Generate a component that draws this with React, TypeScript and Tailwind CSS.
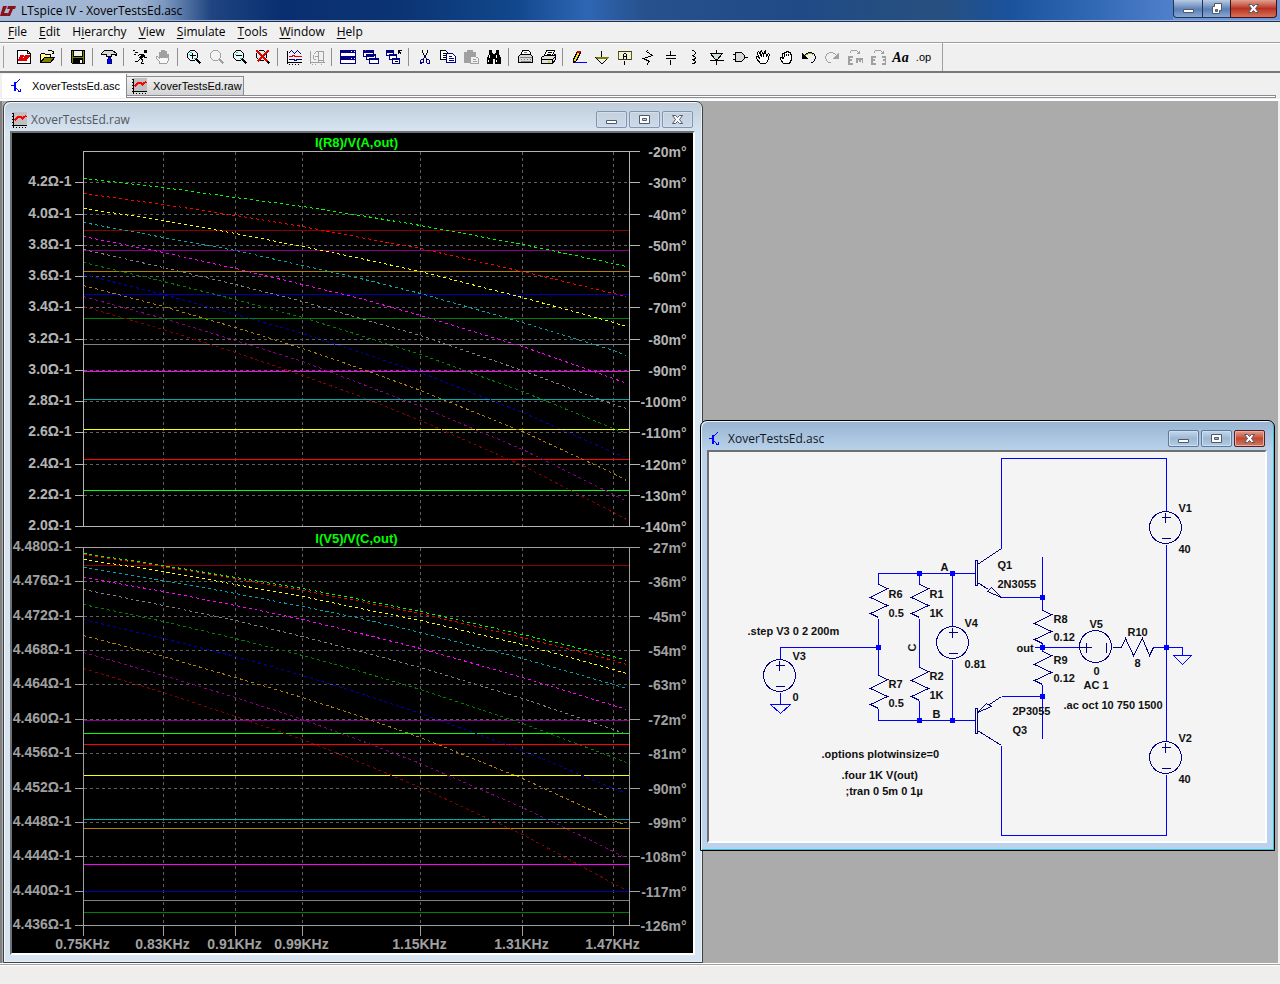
import clsx from "clsx";
import type { ReactNode } from "react";

/**
 * SPICE workbench shell
 *
 * LAYOUT STRUCTURE:
 * Title bar → menu → toolbar → document tabs → MDI desktop → status bar
 *
 * Drawings use viewBoxes shifted by half a pixel, so whole-number coordinates
 * land on pixel centres.
 */

type Layer = { d: string; s?: string; f?: string; w?: number };

const K = "#000000";
const NAVY = "#000080";
const GREY = "#a0a0a0";

const ICONS: Record<string, Layer[]> = {
  new: [
    { d: "M1 1H11L14 4V14H1Z", s: K, f: "#fff" },
    { d: "M11 1V4H14", s: K },
    { d: "M2 11L4 6H7L6 9H8L7 11ZM8 11L10 8H8L9 6H13L12 8H11L10 11Z", s: "#e00000", f: "#e00000" },
  ],
  open: [
    { d: "M1 13V5L2 4H5L6 5H11V7", s: K, f: "#ffff90" },
    { d: "M1 13L5 8H15L11 13Z", s: K, f: "#808000" },
    { d: "M8 2L9 1H12L14 3M14 1V4M12 4H14", s: K },
  ],
  save: [
    { d: "M1 1H14V14H2L1 13Z", s: K, f: "#808000" },
    { d: "M3 1H12V7H3Z", s: K, f: "#f0f0f0" },
    { d: "M3 9H12V14H3Z", s: K, f: K },
    { d: "M10 10V13", s: "#fff", w: 2 },
  ],
  hammer: [
    { d: "M0 4L3 1H11L15 4V6L13 5H10V7H5V5H0Z", s: K, f: "#d8d8d8" },
    { d: "M7 8H9V10H10V14H6V10H7Z", s: NAVY, f: "#0000ff" },
  ],
  run: [
    { d: "M12 1H14V3H12Z", s: K, f: K },
    { d: "M11 5L8 9", s: K, w: 3 },
    { d: "M10 5H7L5 7M11 6L12 8H14M8 9L5 12H2M9 9L10 11L9 14H11M0 1H2M2 3H5M1 5H3", s: K },
  ],
  hand: [
    {
      d: "M4 14V12L1 9V7H2L4 9V3H5V8H6V1H7V8H8V1H9V8H10V2H11V8H12V5H13V11L11 14Z",
      s: GREY,
      f: "#f8f8f8",
    },
  ],
  zoomIn: [
    { d: "M4 1H8L11 4V8L8 11H4L1 8V4Z", s: K, f: "#e8f8f8" },
    { d: "M3 3H5M3 4V5M9 8V9H7", s: "#00d0d0" },
    { d: "M3 6H9M6 3V9", s: K },
    { d: "M10 10L14 14", s: K, w: 2 },
  ],
  zoomPan: [
    { d: "M4 1H8L11 4V8L8 11H4L1 8V4Z", s: GREY, f: "#f4f4f4" },
    { d: "M10 10L14 14", s: GREY, w: 2 },
  ],
  zoomOut: [
    { d: "M4 1H8L11 4V8L8 11H4L1 8V4Z", s: K, f: "#e8f8f8" },
    { d: "M3 3H5M3 4V5M9 8V9H7", s: "#00d0d0" },
    { d: "M3 6H9", s: K },
    { d: "M10 10L14 14", s: K, w: 2 },
  ],
  zoomFit: [
    { d: "M4 1H8L11 4V8L8 11H4L1 8V4Z", s: K, f: "#d0f0f0" },
    { d: "M10 10L14 14", s: K, w: 2 },
    { d: "M1 1L12 12M13 1L2 12", s: "#e00000", w: 2 },
  ],
  plot: [
    { d: "M1 1V14M0 2H1M0 5H1M0 8H1M0 11H1M0 13H15M3 14V15M6 14V15M9 14V15M12 14V15", s: K },
    { d: "M2 4L5 1L8 4L11 1L15 5", s: NAVY },
    { d: "M2 7H5L7 6L9 7H15", s: "#e00000" },
    { d: "M2 10H7L9 11L11 10H15", s: NAVY },
  ],
  plotPick: [
    { d: "M1 1V14M0 2H1M0 5H1M0 8H1M0 13H15M3 14V15M6 14V15M12 14V15", s: GREY },
    { d: "M4 5L7 2H14M9 2V13M14 2V13M5 7H8M9 11H14M4 5V9L7 11", s: GREY },
  ],
  tile: [
    { d: "M0 1H15V7H0ZM0 8H15V14H0Z", s: NAVY, f: "#fff" },
    { d: "M0 2H15M0 9H15", s: NAVY, w: 2 },
    { d: "M10 2H11M13 2H14M10 9H11M13 9H14", s: "#fff" },
  ],
  cascade: [
    { d: "M0 1H10V7H0ZM3 5H12V10H3ZM6 9H15V14H6Z", s: NAVY, f: "#fff" },
    { d: "M0 2H10M3 5H12M6 9H15", s: NAVY, w: 2 },
    { d: "M1 1H2", s: "#e000e0" },
  ],
  closeAll: [
    { d: "M0 1H7V6H0ZM3 5H10V10H3ZM6 9H13V14H6Z", s: NAVY, f: "#fff" },
    { d: "M0 2H7M3 5H10M6 9H13", s: NAVY, w: 2 },
    { d: "M8 12H11M12 1H15M12 1V4M12 1L15 5", s: K },
  ],
  cut: [
    { d: "M5 0V3L8 8M10 0V3L7 8", s: K },
    { d: "M6 3V5M9 3V5", s: K },
    { d: "M7 8L5 10M8 8L10 10M4 10H6V13H5L3 14V11ZM9 10H11L12 11V14H10L9 13Z", s: NAVY },
  ],
  copy: [
    { d: "M0 1H5L8 4V10H0Z", s: K, f: "#fff" },
    { d: "M2 4H5M2 6H6M2 8H6", s: K },
    { d: "M6 4H12L15 7V13H6Z", s: NAVY, f: "#fff" },
    { d: "M8 7H11M8 9H13M8 11H13", s: NAVY },
  ],
  paste: [
    { d: "M1 3H4V1H9V3H12V13H1Z", s: GREY, f: GREY },
    { d: "M7 7H12L15 9V14H7Z", s: GREY, f: "#f0f0f0" },
    { d: "M9 10H12M9 12H13", s: GREY },
  ],
  find: [
    { d: "M3 1H5V4H6V14H1V9L3 4ZM10 1H12V4L14 9V14H9V4H10ZM6 5H9V9H6Z", s: K, f: K },
    { d: "M3 5V8M2 10V12M10 5V8M10 10V12", s: "#fff" },
  ],
  print: [
    { d: "M3 6L5 1H11L13 3V6", s: K, f: "#fff" },
    { d: "M1 7L3 5H13L15 7V13H1Z", s: K, f: "#d8d8d8" },
    { d: "M6 3H9M2 8H14M3 10H4M6 10H7M9 10H10M12 10H13M3 12H13", s: "#808080" },
  ],
  printSetup: [
    { d: "M4 6L6 1H14L12 6", s: K, f: "#fff" },
    { d: "M1 8L4 6H13L15 5V10L12 14H1Z", s: K, f: "#e0e0e0" },
    { d: "M1 10H12L15 7M12 10V14M7 3H11M6 5H10", s: K },
    { d: "M7 12H9", s: "#e0d000", w: 2 },
  ],
  pencil: [
    { d: "M2 13V10L6 2L9 3L5 11Z", s: K, f: "#ffe000" },
    { d: "M6 2L9 3", s: "#e00000", w: 2 },
    { d: "M2 11V13", s: K, w: 2 },
    { d: "M3 13H15", s: "#0000ff" },
  ],
  ground: [
    { d: "M7 1V8", s: K },
    { d: "M1 8H14L8 14H7Z", s: K, f: "#f0f0f0" },
    { d: "M1 8H14M2 9H13", s: "#808000" },
  ],
  label: [
    { d: "M1 2H14V10H1Z", s: "#404000", f: "#f0f0e0" },
    { d: "M6 9V5L7 4H8L9 5V9M6 7H9M7 11V15", s: K },
    { d: "M1 2V10M14 2V10", s: "#606000" },
  ],
  resistor: [{ d: "M7 0V1L6 2L12 6L3 9L9 12L7 14V15", s: K }],
  capacitor: [
    { d: "M7 1V6M7 10V15", s: K },
    { d: "M2 6H12M2 9H12", s: K },
  ],
  inductor: [{ d: "M5 1H7L9 3V4L7 6H5M6 6L9 8V9L7 10H5M6 10L9 12V13L7 14H5", s: K }],
  diode: [
    { d: "M7 0V15M0 11H14", s: K },
    { d: "M1 4H13L8 10H6Z", s: K, f: "#c8e0e0" },
  ],
  gate: [
    { d: "M3 3H9L12 6V9L9 12H3Z", s: K, f: "#d8d8d8" },
    { d: "M0 5H3M0 10H3M12 8H15", s: K },
  ],
  move: [
    {
      d: "M5 14L1 9V7H2L4 9L2 4V3L3 2L6 7L5 2L6 1L8 6L9 2L10 1L11 7L13 4L14 5L12 12L10 14Z",
      s: K,
      f: "#fff",
    },
  ],
  drag: [
    { d: "M5 14L2 10V8H3L5 9L4 6V4H6V3H8V2H10V3H12V5H13V10L11 14Z", s: K, f: "#fff" },
    { d: "M6 4V7M8 4V6M10 4V6", s: K },
  ],
  undo: [
    { d: "M3 6L5 4L8 3H10L13 5L14 8L13 11L11 13H9", s: K },
    { d: "M4 6L7 4H10L12 6", s: "#b0b000" },
    { d: "M1 4V9H6Z", s: K, f: K },
  ],
  redo: [
    { d: "M12 6L10 4L7 3H5L2 5L1 8L2 11L4 13H6", s: GREY },
    { d: "M14 4V9H9Z", s: GREY, f: GREY },
  ],
  mirror: [
    { d: "M2 4L4 1H9L12 4M12 1V4H9", s: GREY },
    { d: "M5 7H1V14H5M1 10H4M8 9H15M15 9V13M12 9V12M9 9V13", s: GREY, w: 2 },
  ],
  rotate: [
    { d: "M3 4L5 1H10L13 4M13 1V4H10", s: GREY },
    { d: "M5 7H1V14H5M1 10H4M11 7H15V14H11M15 10H12", s: GREY, w: 2 },
  ],
  schematic: [
    { d: "M0 7H3M5 5L9 1M5 9L10 14M7 13H10V10M8 11V13H9", s: "#0000ff" },
    { d: "M4 3V12", s: "#0000ff", w: 2 },
  ],
  waveform: [
    { d: "M2 0H15V13H2Z", f: "#c0c0c0", s: "#c0c0c0" },
    { d: "M2 0V15M0 13H15M0 1H1M0 4H1M0 7H1M0 10H1M5 14V15M8 14V15M11 14V15M14 14V15", s: K },
    { d: "M3 8L7 4H9L11 6L15 3", s: "#ff0000", w: 2 },
  ],
};

function Icon({ name }: { name: string }) {
  return (
    <svg viewBox="-0.5 -0.5 16 16" className="size-4 shrink-0" shapeRendering="crispEdges" aria-hidden="true">
      {ICONS[name].map((l, i) => (
        <path key={i} d={l.d} fill={l.f ?? "none"} stroke={l.s ?? "none"} strokeWidth={l.w ?? 1} />
      ))}
    </svg>
  );
}

const TOOL_GROUPS = [
  ["new", "open"],
  ["save"],
  ["hammer"],
  ["run", "hand"],
  ["zoomIn", "zoomPan", "zoomOut", "zoomFit"],
  ["plot", "plotPick"],
  ["tile", "cascade", "closeAll"],
  ["cut", "copy", "paste", "find"],
  ["print", "printSetup"],
  [
    "pencil", "ground", "label", "resistor", "capacitor", "inductor", "diode", "gate",
    "move", "drag", "undo", "redo", "mirror", "rotate",
  ],
];

const MENUS = ["File", "Edit", "Hierarchy", "View", "Simulate", "Tools", "Window", "Help"];

/* ---------- Plots ---------- */

const C = {
  green: "#00ff00",
  red: "#ff0000",
  yellow: "#ffff00",
  teal: "#00a8a8",
  magenta: "#ff00ff",
  grey: "#808080",
  dgreen: "#008000",
  blue: "#0000b0",
  orange: "#b08000",
  purple: "#880088",
  maroon: "#880000",
};

const XS = [83, 163, 235, 302, 360, 420, 522, 613, 626];
const X_TICKS: [number, string][] = [
  [83, "0.75KHz"],
  [163, "0.83KHz"],
  [235, "0.91KHz"],
  [302, "0.99KHz"],
  [420, "1.15KHz"],
  [522, "1.31KHz"],
  [613, "1.47KHz"],
];

type Pane = {
  title: string;
  titleY: number;
  axis: string;
  ticks: number[];
  left: string[];
  right: string[];
  levels: [number, string][];
  curves: [string, number[]][];
};

const PANES: Pane[] = [
  {
    title: "I(R8)/V(A,out)",
    titleY: 146,
    axis: "#b4b4b4",
    ticks: [151, 182, 214, 245, 276, 307, 339, 370, 401, 432, 464, 495, 526],
    left: ["", "4.2", "4.0", "3.8", "3.6", "3.4", "3.2", "3.0", "2.8", "2.6", "2.4", "2.2", "2.0"],
    right: ["-20", "-30", "-40", "-50", "-60", "-70", "-80", "-90", "-100", "-110", "-120", "-130", "-140"],
    levels: [
      [230, C.maroon], [250, C.purple], [271, C.orange], [294, C.blue], [318, C.dgreen], [344, C.grey],
      [371, C.magenta], [399, C.teal], [429, C.yellow], [459, C.red], [490, C.green],
    ],
    curves: [
      [C.maroon, [306, 329, 352, 375, 396, 420, 465, 512, 519]],
      [C.purple, [296, 318, 340, 361, 383, 406, 449, 494, 501]],
      [C.orange, [285, 306, 327, 348, 368, 390, 431, 473, 480]],
      [C.blue, [274, 294, 314, 333, 352, 372, 412, 452, 457]],
      [C.dgreen, [262, 281, 299, 317, 335, 354, 391, 428, 433]],
      [C.grey, [249, 267, 284, 301, 318, 335, 370, 404, 408]],
      [C.magenta, [236, 252, 268, 284, 298, 315, 346, 378, 383]],
      [C.teal, [222, 237, 250, 265, 278, 293, 322, 350, 355]],
      [C.yellow, [208, 220, 233, 246, 258, 271, 297, 322, 326]],
      [C.red, [193, 204, 215, 226, 237, 248, 271, 293, 296]],
      [C.green, [178, 187, 197, 206, 215, 225, 244, 263, 266]],
    ],
  },
  {
    title: "I(V5)/V(C,out)",
    titleY: 542,
    axis: "#a0a0a0",
    ticks: [547, 581, 616, 650, 684, 719, 753, 788, 822, 856, 891, 925],
    left: [
      "4.480", "4.476", "4.472", "4.468", "4.464", "4.460", "4.456", "4.452", "4.448", "4.444", "4.440", "4.436",
    ],
    right: ["-27", "-36", "-45", "-54", "-63", "-72", "-81", "-90", "-99", "-108", "-117", "-126"],
    levels: [
      [565, C.maroon], [720, C.purple], [733, C.green], [744, C.red], [775, C.yellow], [819, C.teal],
      [828, C.orange], [864, C.magenta], [891, C.blue], [900, C.grey], [912, C.dgreen],
    ],
    curves: [
      [C.maroon, [668, 692, 716, 739, 762, 787, 834, 883, 890]],
      [C.purple, [652, 675, 697, 719, 740, 763, 807, 851, 858]],
      [C.orange, [635, 656, 677, 697, 716, 737, 778, 820, 825]],
      [C.blue, [619, 638, 656, 675, 693, 713, 750, 788, 793]],
      [C.dgreen, [604, 621, 638, 655, 671, 689, 723, 757, 762]],
      [C.grey, [589, 605, 620, 636, 651, 667, 698, 729, 734]],
      [C.magenta, [577, 591, 605, 619, 633, 648, 677, 705, 709]],
      [C.teal, [567, 580, 593, 606, 618, 632, 658, 684, 688]],
      [C.yellow, [559, 571, 584, 596, 608, 620, 644, 669, 673]],
      [C.red, [554, 566, 578, 590, 601, 613, 637, 660, 664]],
      [C.green, [553, 565, 577, 588, 599, 611, 634, 656, 660]],
    ],
  },
];

function PlotPane({ pane, last }: { pane: Pane; last?: boolean }) {
  const top = pane.ticks[0];
  const bottom = pane.ticks[pane.ticks.length - 1];
  const inner = pane.ticks.slice(1, -1);
  return (
    <g>
      <g shapeRendering="crispEdges" fill="none">
        {inner.map((y) => (
          <path key={y} d={`M83 ${y}H629`} stroke="#606060" strokeDasharray="3 3" />
        ))}
        {X_TICKS.slice(1).map(([x]) => (
          <path key={x} d={`M${x} ${top}V${bottom}`} stroke="#606060" strokeDasharray="3 3" />
        ))}
        {pane.levels.map(([y, color]) => (
          <path key={y} d={`M83 ${y}H629`} stroke={color} />
        ))}
        {pane.curves.map(([color, ys]) => (
          <polyline
            key={color}
            points={ys.map((y, i) => `${XS[i]},${y}`).join(" ")}
            stroke={color}
            strokeDasharray="3 3"
          />
        ))}
        <path d={`M83 ${top}H629V${bottom}H83Z`} stroke={pane.axis} />
        {pane.ticks.map((y, i) => (
          <path key={y} d={pane.left[i] ? `M74 ${y}H83M629 ${y}H639` : `M629 ${y}H639`} stroke={pane.axis} />
        ))}
        {last && X_TICKS.map(([x]) => <path key={x} d={`M${x} ${bottom}V935`} stroke={pane.axis} />)}
      </g>
      <g className="text-[14px] font-bold" fill={pane.axis}>
        {pane.ticks.map((y, i) => (
          <g key={y} textAnchor="end">
            {pane.left[i] && <text x={71} y={y + 3}>{pane.left[i]}Ω-1</text>}
            <text x={686} y={y + 5}>{pane.right[i]}m°</text>
          </g>
        ))}
        {last &&
          X_TICKS.map(([x, label]) => (
            <text key={x} x={x - 1} y={948} textAnchor="middle">
              {label}
            </text>
          ))}
      </g>
      <text x={356} y={pane.titleY} textAnchor="middle" fill={C.green} className="text-[13px] font-bold">
        {pane.title}
      </text>
    </g>
  );
}

function Waveforms() {
  return (
    <svg
      viewBox="11.5 132.5 681 820"
      className="block h-full w-full bg-black font-['Liberation_Sans',Arial,sans-serif]"
      role="img"
      aria-label="Waveform plots"
    >
      <PlotPane pane={PANES[0]} />
      <PlotPane pane={PANES[1]} last />
    </svg>
  );
}

/* ---------- Schematic ---------- */

const WIRES =
  "M1001 548V458H1166V511M1166 544V741M1166 774V835H1001V745" +
  "M975 573H878V584M878 618V675M878 708V720H975M919 573V584M919 618V667M919 700V720" +
  "M952 573V626M952 659V720M878 647H780V659M780 692V704M770 704H790L780 713Z" +
  "M1001 597H1042M1042 556V610M1042 642V651M1042 684V738M1001 696H1042" +
  "M1034 647H1079M1153 647H1182V655M1173 655H1191L1182 664Z";

const PARTS =
  "M975 560H977V585H975ZM977 564L1001 548M977 582L988 589M987 591L991 587L1001 597Z" +
  "M975 708H977V733H975ZM977 730L1001 745M977 712L986 703L991 706ZM989 704L1001 696" +
  "M1112 647H1121L1125 638L1133 655L1142 638L1149 655L1153 647";

/** Vertical resistors, given by their top end */
const RESISTORS: [number, number][] = [[878, 584], [919, 584], [878, 675], [919, 667], [1042, 610], [1042, 651]];

const SOURCES: [number, number][] = [[779, 675], [952, 642], [1165, 527], [1165, 757]];

const NODES: [number, number][] = [
  [878, 647], [919, 573], [952, 573], [919, 720], [952, 720], [1042, 597], [1042, 647], [1042, 696], [1166, 647],
];

const LABELS: [number, number, string][] = [
  [747, 634, ".step V3 0 2 200m"],
  [792, 659, "V3"], [792, 700, "0"],
  [888, 597, "R6"], [888, 616, "0.5"],
  [929, 597, "R1"], [929, 616, "1K"],
  [888, 687, "R7"], [888, 706, "0.5"],
  [929, 679, "R2"], [929, 698, "1K"],
  [964, 626, "V4"], [964, 667, "0.81"],
  [940, 570, "A"], [932, 717, "B"],
  [821, 757, ".options plotwinsize=0"],
  [841, 778, ".four 1K V(out)"],
  [845, 794, ";tran 0 5m 0 1µ"],
  [997, 568, "Q1"], [997, 587, "2N3055"],
  [1012, 714, "2P3055"], [1012, 733, "Q3"],
  [1053, 622, "R8"], [1053, 640, "0.12"],
  [1053, 663, "R9"], [1053, 681, "0.12"],
  [1016, 651, "out"],
  [1089, 627, "V5"], [1093, 674, "0"], [1083, 688, "AC 1"],
  [1127, 635, "R10"], [1134, 666, "8"],
  [1063, 708, ".ac oct 10 750 1500"],
  [1178, 511, "V1"], [1178, 552, "40"],
  [1178, 741, "V2"], [1178, 782, "40"],
];

function Schematic() {
  return (
    <svg
      viewBox="708.5 451.5 556 389"
      className="block h-full w-full bg-[#f4f4f4] font-['Liberation_Sans',Arial,sans-serif]"
      role="img"
      aria-label="Schematic"
    >
      <g shapeRendering="crispEdges" fill="none">
        <path d={WIRES} stroke="#0000ff" />
        <g stroke={NAVY}>
          <path d={PARTS} />
          {RESISTORS.map(([x, y]) => (
            <path key={`${x}-${y}`} d={`M${x} ${y}l9 4l-17 9l17 8l-17 8l8 4`} />
          ))}
          {SOURCES.map(([x, y]) => (
            <g key={`${x}-${y}`}>
              <circle cx={x} cy={y} r={16} />
              <path d={`M${x - 4} ${y - 10}h9M${x} ${y - 15}v10M${x - 4} ${y + 11}h9`} />
            </g>
          ))}
          <circle cx={1095} cy={646} r={16} />
          <path d="M1079 647H1091M1086 642V652M1106 642V652" />
        </g>
        {NODES.map(([x, y]) => (
          <path key={`${x}-${y}`} d={`M${x - 2.5} ${y}h5`} stroke="#0000ff" strokeWidth={5} />
        ))}
      </g>
      <g className="text-[11px] font-bold" fill="#101010">
        {LABELS.map(([x, y, label]) => (
          <text key={`${x}-${y}`} x={x} y={y}>
            {label}
          </text>
        ))}
        <text transform="translate(915 651) rotate(-90)">C</text>
      </g>
    </svg>
  );
}

/* ---------- Windows ---------- */

function Glyph({ kind }: { kind: string }) {
  return (
    <svg viewBox="-0.5 -0.5 13 11" className="h-[11px] w-[13px]" aria-hidden="true">
      {kind === "Minimize" && <path d="M1 6H11V9H1Z" fill="#fff" stroke="#50586c" />}
      {kind === "Maximize" && (
        <path d="M1 1H11V9H1ZM4 4H8V6H4Z" fill="#fff" fillRule="evenodd" stroke="#50586c" />
      )}
      {kind === "Restore" && (
        <path d="M4 0H11V7H9V10H2V3H4ZM5 6H7V8H5Z" fill="#fff" fillRule="evenodd" stroke="#50586c" />
      )}
      {kind === "Close" && (
        <path
          d="M1 1H4L6 3L8 1H11L8 5L11 9H8L6 7L4 9H1L4 5Z"
          fill="#fff"
          stroke="#50586c"
        />
      )}
    </svg>
  );
}

function ChildWindow({
  title,
  icon,
  active,
  className,
  children,
}: {
  title: string;
  icon: string;
  active?: boolean;
  className: string;
  children: ReactNode;
}) {
  return (
    <section
      aria-label={title}
      className={clsx(
        "absolute flex flex-col rounded-t-[7px] border pr-[7px] pb-[7px] pl-[6px]",
        active
          ? "border-black bg-[#bad2eb] bg-linear-to-b from-[#98b4d2] from-0% to-[#bad2eb] to-[30px] shadow-[inset_1px_1px_0_#e8f4fc,inset_-1px_-1px_0_#38c0d8]"
          : "border-[#404040] bg-[#d7e4f2] bg-linear-to-b from-[#bfccd9] from-0% to-[#d7e4f2] to-[30px] shadow-[inset_1px_1px_0_#f4f8fc,inset_-1px_-1px_0_#e8f0f8]",
        className,
      )}
    >
      <header className="flex h-[29px] shrink-0 items-center gap-1 pt-[6px] pr-[2px] pl-px">
        <Icon name={icon} />
        <h2 className={clsx("flex-1 text-[12px]", active ? "text-[#101820]" : "text-[#505860]")}>{title}</h2>
        <div className="flex gap-[2px]">
          {["Minimize", "Maximize", "Close"].map((kind) => (
            <button
              key={kind}
              type="button"
              aria-label={kind}
              className={clsx(
                "flex h-[17px] w-[31px] items-center justify-center rounded-[2px] border",
                !active && "border-[#8494b0] bg-linear-to-b from-[#c4d0de] to-[#ccd9e8] shadow-[inset_0_0_0_1px_#d4dfeb]",
                active && kind === "Close" && "border-[#5c1c20] bg-linear-to-b from-[#e4a090] via-[#c04830] via-50% to-[#d07860] shadow-[inset_0_0_0_1px_#e8b0a0]",
                active && kind !== "Close" && "border-[#607898] bg-linear-to-b from-[#c4d8ec] via-[#9cb8d4] via-50% to-[#b4cce4] shadow-[inset_0_0_0_1px_#cce0f0]",
              )}
            >
              <Glyph kind={kind} />
            </button>
          ))}
        </div>
      </header>
      <div className="min-h-0 flex-1 border-2 border-t-[#707070] border-r-white border-b-white border-l-[#707070]">
        {children}
      </div>
    </section>
  );
}

/* ---------- Shell ---------- */

function TitleBar() {
  return (
    <header className="flex h-[22px] shrink-0 border-b border-[#1e2f50]">
      <div className="flex min-w-0 flex-1 items-center gap-[5px] bg-[linear-gradient(90deg,#a8bcd8_0%,#9cb2d0_12%,#7c98c0_14%,#1f4480_18%,#0a2f70_24%,#0b3474_34%,#11488c_44%,#2f66b4_50%,#27518c_55%,#1f4a86_68%,#28507f_80%,#1a529c_86%,#3068b4_93%,#5080cc_100%)] shadow-[inset_0_-1px_0_#9fb4d4]">
        <svg viewBox="0 0 16 12" className="h-3 w-4" aria-hidden="true">
          <path d="M3 1H7L4 8H8L7 11H0ZM8 1H16L15 4H13L10 11H7L10 4H7Z" fill="#8c1018" />
        </svg>
        <h1 className="text-[12px] text-black">LTspice IV - XoverTestsEd.asc</h1>
      </div>
      <div className="flex w-[107px] bg-[#6c96d8] pr-[3px] shadow-[inset_0_-1px_0_#9fb4d4]">
        <button
          type="button"
          aria-label="Minimize"
          className="flex h-[18px] w-[30px] items-center justify-center rounded-bl-[4px] border border-t-0 border-[#203458] bg-linear-to-b from-[#b8cce4] via-[#5c80b4] via-55% to-[#88a8d4]"
        >
          <Glyph kind="Minimize" />
        </button>
        <button
          type="button"
          aria-label="Restore"
          className="flex h-[18px] w-[27px] items-center justify-center border-b border-[#203458] bg-linear-to-b from-[#b8cce4] via-[#5c80b4] via-55% to-[#88a8d4]"
        >
          <Glyph kind="Restore" />
        </button>
        <button
          type="button"
          aria-label="Close"
          className="flex h-[18px] flex-1 items-center justify-center rounded-br-[4px] border border-t-0 border-[#401018] bg-linear-to-b from-[#e0a090] via-[#b83020] via-50% to-[#d87058]"
        >
          <Glyph kind="Close" />
        </button>
      </div>
    </header>
  );
}

function Toolbar() {
  return (
    <div
      role="toolbar"
      aria-label="Main"
      className="flex h-[30px] shrink-0 items-center border-b-2 border-[#787878] pl-[3px]"
    >
      <div className="mr-2 h-[22px] w-px bg-[#a0a0a0]" />
      {TOOL_GROUPS.map((group, i) => (
        <div key={group[0]} className="flex items-center">
          {i > 0 && <div className="mr-1 ml-[3px] h-[18px] w-px bg-[#909090]" />}
          {group.map((name) => (
            <button
              key={name}
              type="button"
              aria-label={name}
              className="flex h-[22px] w-[23px] items-center justify-center"
            >
              <Icon name={name} />
            </button>
          ))}
        </div>
      ))}
      <button
        type="button"
        className="h-[22px] w-[23px] font-['Liberation_Serif',serif] text-[14px] font-bold italic"
      >
        Aa
      </button>
      <button type="button" className="h-[22px] w-[23px] font-['Liberation_Sans',Arial,sans-serif] text-[11px]">
        .op
      </button>
      <div className="ml-[7px] h-full w-px bg-[#a0a0a0]" />
    </div>
  );
}

function DocumentTabs() {
  return (
    <div className="flex h-[27px] shrink-0 flex-col">
      <nav aria-label="Documents" className="flex h-[21px] items-end pl-[2px]">
        <button
          type="button"
          className="relative -mb-[3px] flex h-6 w-[125px] items-center gap-[6px] border-r border-[#898c95] bg-white pl-2 font-['Liberation_Sans',Arial,sans-serif] text-[11px]"
        >
          <Icon name="schematic" />
          XoverTestsEd.asc
        </button>
        <button
          type="button"
          className="flex h-[19px] w-[117px] items-center gap-[6px] border border-b-0 border-l-0 border-[#898c95] bg-linear-to-b from-[#f0f0f0] to-[#d4d4d4] pl-1 font-['Liberation_Sans',Arial,sans-serif] text-[11px]"
        >
          <Icon name="waveform" />
          XoverTestsEd.raw
        </button>
      </nav>
      <div className="mr-1 ml-[2px] h-[3px] border border-l-0 border-[#898c95] bg-white" />
      <div className="mt-px h-[2px] bg-white" />
    </div>
  );
}

export default function App() {
  return (
    <div className="flex h-screen flex-col overflow-hidden bg-[#f0f0f0] pb-px font-['Open_Sans','Segoe_UI',sans-serif] text-black">
      <TitleBar />
      <nav
        aria-label="Menu"
        className="flex h-[21px] shrink-0 items-center gap-3 border-b border-[#a0a0a0] pl-2 text-[12px] shadow-[0_1px_0_#fff]"
      >
        {MENUS.map((menu) => (
          <button key={menu} type="button">
            {menu === "Hierarchy" ? (
              <>
                H<u className="underline-offset-2">i</u>erarchy
              </>
            ) : (
              <>
                <u className="underline-offset-2">{menu[0]}</u>
                {menu.slice(1)}
              </>
            )}
          </button>
        ))}
      </nav>
      <div className="flex h-[31px] shrink-0 flex-col">
        <Toolbar />
      </div>
      <DocumentTabs />
      <main className="relative mr-[2px] min-h-0 flex-1 overflow-hidden border-l-2 border-[#808080] bg-[#ababab]">
        <ChildWindow title="XoverTestsEd.raw" icon="waveform" className="top-0 left-px h-[862px] w-[700px]">
          <Waveforms />
        </ChildWindow>
        <ChildWindow
          title="XoverTestsEd.asc"
          icon="schematic"
          active
          className="top-[319px] left-[698px] h-[431px] w-[575px]"
        >
          <Schematic />
        </ChildWindow>
      </main>
      <footer className="h-5 shrink-0 border-t border-white bg-[#f0eded] shadow-[inset_0_1px_0_#a0a0a0,inset_0_2px_0_#fff]" />
    </div>
  );
}
